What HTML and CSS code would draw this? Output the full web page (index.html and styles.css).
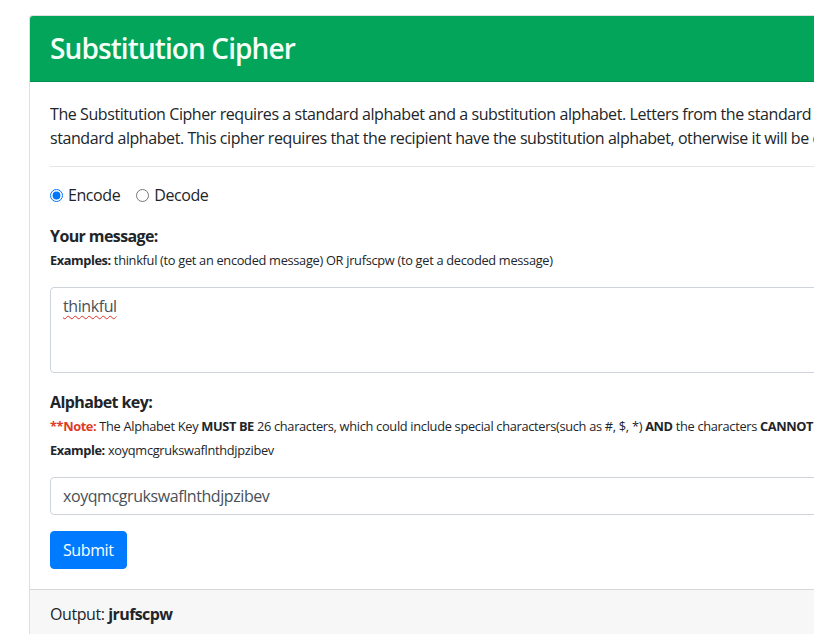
FILE: index.html
```html
<!DOCTYPE html>
<html lang="en">
<head>
<meta charset="utf-8">
<title>Substitution Cipher</title>
<link rel="stylesheet" href="styles.css">
</head>
<body>
<div class="card">
  <div class="card-header">
    <h2 class="title">Substitution Cipher</h2>
  </div>
  <div class="card-body">
    <p class="intro"><span class="line">The Substitution Cipher requires a standard alphabet and a substitution alphabet. Letters from the standard alphabet will be replaced with letters from the substitution alphabet at the same position in the</span><span class="line">standard alphabet. This cipher requires that the recipient have the substitution alphabet, otherwise it will be difficult to decode the message.</span></p>
    <hr class="divider">
    <div class="radios">
      <label class="radio"><input type="radio" name="mode" checked> Encode</label>
      <label class="radio"><input type="radio" name="mode"> Decode</label>
    </div>
    <div class="group group-first">
      <div class="label">Your message:</div>
      <div class="hint"><b>Examples:</b> thinkful (to get an encoded message) OR jrufscpw (to get a decoded message)</div>
      <div class="textarea"><span class="typo">thinkful</span></div>
    </div>
    <div class="group">
      <div class="label">Alphabet key:</div>
      <div class="hint"><b class="note">**Note:</b> The Alphabet Key <b>MUST BE</b> 26 characters, which could include special characters(such as #, $, *) <b>AND</b> the characters <b>CANNOT</b> be repeated.</div>
      <div class="hint"><b>Example:</b> xoyqmcgrukswaflnthdjpzibev</div>
      <div class="input">xoyqmcgrukswaflnthdjpzibev</div>
    </div>
    <button class="btn">Submit</button>
  </div>
  <div class="card-footer">Output: <b>jrufscpw</b></div>
</div>
</body>
</html>
```
FILE: styles.css
```css
html, body {
  margin: 0;
  overflow: hidden;
}
body {
  padding: 15px 0 0 29px;
  font-family: "Open Sans", "Noto Sans", sans-serif;
  font-size: 16px;
  line-height: 24px;
  letter-spacing: -0.42px;
  color: #212529;
  background: #fff;
}
b {
  letter-spacing: -0.6px;
}
.card {
  width: 1200px;
  border: 1px solid rgba(0,0,0,.125);
  border-radius: 4px;
  background: #fff;
}
.card-header {
  background: #03a55a;
  padding: 12px 20px;
  height: 41px;
  border-bottom: 1px solid rgba(0,0,0,.125);
  border-radius: 3px 3px 0 0;
}
.title {
  margin: 0;
  font-size: 28px;
  line-height: 41px;
  font-weight: 600;
  letter-spacing: -0.9px;
  color: #f4fff8;
}
.card-body {
  padding: 20px;
}
.intro {
  margin: 0 0 16px;
}
.line {
  display: block;
  white-space: nowrap;
}
.divider {
  margin: 0 0 16px;
  border: 0;
  border-top: 1px solid rgba(0,0,0,.1);
}
.radios {
  display: flex;
  gap: 16px;
  margin-bottom: 17px;
}
.radio {
  display: flex;
  align-items: center;
  gap: 5px;
}
.radio input {
  margin: 0;
  width: 13px;
  height: 13px;
  accent-color: #0075ff;
}
.group {
  margin-bottom: 16px;
}
.group-first {
  margin-bottom: 17px;
}
.label {
  font-weight: 700;
  letter-spacing: -0.6px;
}
.hint {
  font-size: 12.8px;
  letter-spacing: -0.3px;
  white-space: nowrap;
}
.hint b {
  letter-spacing: -0.4px;
}
.note {
  color: #e03b24;
}
.textarea, .input {
  border: 1px solid #ced4da;
  border-radius: 4px;
  padding: 6px 12px;
  color: #495057;
  margin-top: 15px;
}
.textarea {
  height: 72px;
}
.input {
  height: 24px;
}
.typo {
  text-decoration: underline wavy #e0302a;
  text-decoration-thickness: 1px;
  text-underline-offset: 3px;
}
.btn {
  font: inherit;
  letter-spacing: -0.4px;
  color: #fff;
  background: #007bff;
  border: 1px solid #007bff;
  border-radius: 4px;
  padding: 6px 12px;
  height: 38px;
  display: block;
}
.card-footer {
  background: #f7f7f7;
  border-top: 1px solid rgba(0,0,0,.125);
  padding: 12px 20px;
  height: 40px;
}
```
